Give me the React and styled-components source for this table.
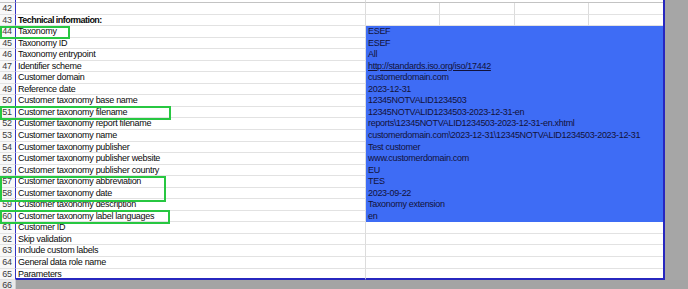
import React from 'react';
import styled, {createGlobalStyle} from "styled-components";

const ROW_H = 11.55;

const GlobalStyle = createGlobalStyle`
  html, body {
    margin: 0;
    padding: 0;
    background: #a6a6a6;
  }
  body {
    font-family: "Liberation Sans", Arial, sans-serif;
  }
`;

const StyledSheet = styled.div`
  position: relative;
  width: 688px;
  height: 289px;
  overflow: hidden;
  background: #a6a6a6;
  font-size: 9px;
  letter-spacing: -0.3px;
  color: #0a0a0a;
`;

const StyledRow = styled.div`
  display: grid;
  grid-template-columns: 16px 350px repeat(4, 74.25px) 25px;
  height: ${props => props.$height || ROW_H}px;
  background: ${props => props.$outside ? '#a6a6a6' : 'transparent'};
`;

const StyledHeader = styled.div`
  box-sizing: border-box;
  background: ${props => props.$outside ? '#e9e9e9' : '#f8f8f8'};
  border-right: 1px solid ${props => props.$outside ? '#cfcfcf' : '#3434c4'};
  border-bottom: 1px solid ${props => props.$dark ? '#c3c3c3' : '#e2e2e2'};
  color: #3c3c3c;
  text-align: center;
  padding-right: 1px;
  line-height: ${ROW_H - 1}px;
  overflow: hidden;
`;

const StyledCell = styled.div`
  box-sizing: border-box;
  grid-column: span ${props => props.$span || 1};
  background: #ffffff;
  border-right: ${props => props.$line ? '1px solid #dcdcdc' : 'none'};
  border-bottom: ${props => props.$last ? '2px solid #2727bf' : `1px solid ${props.$dark ? '#c3c3c3' : '#e2e2e2'}`};
  padding-left: 2px;
  line-height: ${ROW_H - 1}px;
  white-space: nowrap;
  overflow: hidden;
  font-weight: ${props => props.$bold ? 700 : 400};
  letter-spacing: ${props => props.$bold ? '-0.55px' : '-0.3px'};
`;

const StyledValue = styled.div`
  box-sizing: border-box;
  grid-column: span 4;
  background: #3e6cf5;
  color: #12123a;
  padding-left: 2px;
  line-height: ${ROW_H}px;
  white-space: nowrap;
  overflow: hidden;
`;

const StyledLink = styled.span`
  text-decoration: underline;
  text-underline-offset: 1px;
`;

const StyledMargin = styled.div`
  box-sizing: border-box;
  background: #a6a6a6;
  border-left: 2px solid #2727bf;
`;

const StyledOutside = styled.div`
  grid-column: span 6;
  background: #a4a4a4;
`;

const StyledMarker = styled.div`
  position: absolute;
  box-sizing: border-box;
  border: 2px solid #27c741;
  pointer-events: none;
`;

const ROWS = [
    {n: 42, label: '', value: null},
    {n: 43, label: 'Technical information:', bold: true, value: null},
    {n: 44, label: 'Taxonomy', value: 'ESEF'},
    {n: 45, label: 'Taxonomy ID', value: 'ESEF'},
    {n: 46, label: 'Taxonomy entrypoint', value: 'All'},
    {n: 47, label: 'Identifier scheme', value: 'http://standards.iso.org/iso/17442', link: true},
    {n: 48, label: 'Customer domain', value: 'customerdomain.com'},
    {n: 49, label: 'Reference date', value: '2023-12-31'},
    {n: 50, label: 'Customer taxonomy base name', value: '12345NOTVALID1234503'},
    {n: 51, label: 'Customer taxonomy filename', value: '12345NOTVALID1234503-2023-12-31-en'},
    {n: 52, label: 'Customer taxonomy report filename', value: 'reports\\12345NOTVALID1234503-2023-12-31-en.xhtml'},
    {n: 53, label: 'Customer taxonomy name', value: 'customerdomain.com\\2023-12-31\\12345NOTVALID1234503-2023-12-31'},
    {n: 54, label: 'Customer taxonomy publisher', value: 'Test customer'},
    {n: 55, label: 'Customer taxonomy publisher website', value: 'www.customerdomain.com'},
    {n: 56, label: 'Customer taxonomy publisher country', value: 'EU'},
    {n: 57, label: 'Customer taxonomy abbreviation', value: 'TES'},
    {n: 58, label: 'Customer taxonomy date', value: '2023-09-22'},
    {n: 59, label: 'Customer taxonomy description', value: 'Taxonomy extension'},
    {n: 60, label: 'Customer taxonomy label languages', value: 'en'},
    {n: 61, label: 'Customer ID', value: ''},
    {n: 62, label: 'Skip validation', value: ''},
    {n: 63, label: 'Include custom labels', value: ''},
    {n: 64, label: 'General data role name', value: ''},
    {n: 65, label: 'Parameters', value: ''},
];

// green annotation boxes drawn over the sheet
const MARKERS = [
    {left: 0, top: 26, width: 70, height: 13},
    {left: 0, top: 106, width: 171, height: 14},
    {left: 0, top: 176, width: 166, height: 26},
    {left: 0, top: 210, width: 170, height: 14},
];

function SheetRow({row, last}) {
    const top = row.value === null;
    return (
        <StyledRow>
            <StyledHeader>{row.n}</StyledHeader>
            <StyledCell $line $bold={row.bold} $last={last}>{row.label}</StyledCell>
            {top && [0, 1, 2, 3].map(i => <StyledCell key={i} $line={i < 3} />)}
            {!top && row.value === '' && <StyledCell $span={4} $last={last} />}
            {!top && row.value !== '' &&
                <StyledValue>
                    {row.link ? <StyledLink>{row.value}</StyledLink> : row.value}
                </StyledValue>
            }
            <StyledMargin />
        </StyledRow>
    );
}

export default function App() {
    return (
        <StyledSheet>
            <GlobalStyle />
            <StyledRow $height={3}>
                <StyledHeader $dark />
                <StyledCell $line $dark />
                <StyledCell $span={4} $dark />
                <StyledMargin />
            </StyledRow>
            {ROWS.map((row, i) => (
                <SheetRow key={row.n} row={row} last={i === ROWS.length - 1} />
            ))}
            <StyledRow $outside $height={20}>
                <StyledHeader $outside>66</StyledHeader>
                <StyledOutside />
            </StyledRow>
            {MARKERS.map((m, i) => (
                <StyledMarker key={i} style={{left: m.left, top: m.top, width: m.width, height: m.height}} />
            ))}
        </StyledSheet>
    );
}
